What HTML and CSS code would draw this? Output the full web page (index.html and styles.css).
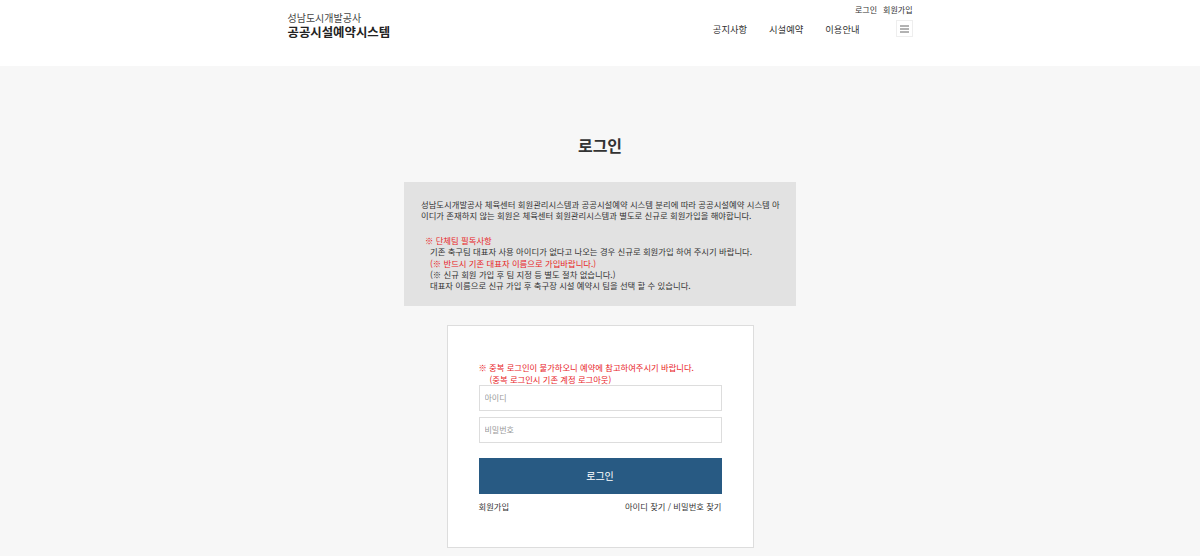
FILE: index.html
```
<!DOCTYPE html>
<html lang="ko">
<head>
    <meta charset="UTF-8">
    <meta name="viewport" content="width=device-width, initial-scale=1.0">
    <title>공공시설예약시스템 - 로그인</title>
    <link rel="stylesheet" href="styles.css">
</head>
<body>
    <header class="header">
        <div class="header-inner">
            <div class="logo">
                <span class="logo-sub">성남도시개발공사</span>
                <span class="logo-main">공공시설예약시스템</span>
            </div>
            <div class="header-right">
                <div class="util">
                    <a href="#">로그인</a>
                    <a href="#">회원가입</a>
                </div>
                <nav class="gnb">
                    <a href="#">공지사항</a>
                    <a href="#">시설예약</a>
                    <a href="#">이용안내</a>
                    <button class="menu-btn" type="button">
                        <svg width="9" height="8" viewBox="0 0 9 8">
                            <path d="M0 1h9M0 4h9M0 7h9" stroke="#666" stroke-width="1"/>
                        </svg>
                    </button>
                </nav>
            </div>
        </div>
    </header>

    <main class="content">
        <h1 class="page-title">로그인</h1>

        <div class="notice">
            <p>성남도시개발공사 체육센터 회원관리시스템과 공공시설예약 시스템 분리에 따라 공공시설예약 시스템 아이디가 존재하지 않는 회원은 체육센터 회원관리시스템과 별도로 신규로 회원가입을 해야합니다.</p>
            <div class="notice-sub">
                <p class="red">※ 단체팀 필독사항</p>
                <p class="indent">기존 축구팀 대표자 사용 아이디가 없다고 나오는 경우 신규로 회원가입 하여 주시기 바랍니다.</p>
                <p class="indent red">(※ 반드시 기존 대표자 이름으로 가입바랍니다.)</p>
                <p class="indent">(※ 신규 회원 가입 후 팀 지정 등 별도 절차 없습니다.)</p>
                <p class="indent">대표자 이름으로 신규 가입 후 축구장 시설 예약시 팀을 선택 할 수 있습니다.</p>
            </div>
        </div>

        <div class="login-box">
            <p class="warn">※ 중복 로그인이 불가하오니 예약에 참고하여주시기 바랍니다.<br><span>(중복 로그인시 기존 계정 로그아웃)</span></p>
            <input class="field" type="text" placeholder="아이디">
            <input class="field" type="password" placeholder="비밀번호">
            <button class="login-btn" type="button">로그인</button>
            <div class="login-links">
                <a href="#">회원가입</a>
                <a href="#">아이디 찾기 / 비밀번호 찾기</a>
            </div>
        </div>
    </main>
</body>
</html>
```

FILE: styles.css
```
* {
    box-sizing: border-box;
}
body {
    margin: 0;
    font-family: "Noto Sans CJK KR", "Noto Sans", sans-serif;
    color: #333;
    background-color: #f7f7f7;
}
a {
    color: inherit;
    text-decoration: none;
}
p {
    margin: 0;
}
.header {
    background-color: #fff;
    height: 66px;
}
.header-inner {
    width: 625px;
    margin: 0 auto;
    display: flex;
    justify-content: space-between;
}
.logo {
    display: flex;
    flex-direction: column;
    padding-top: 12px;
}
.logo-sub {
    font-size: 10px;
    line-height: 12px;
    color: #444;
}
.logo-main {
    font-size: 12.4px;
    line-height: 16px;
    font-weight: bold;
    color: #222;
}
.header-right {
    display: flex;
    flex-direction: column;
    align-items: flex-end;
    padding-top: 4px;
}
.util {
    display: flex;
    gap: 6px;
    font-size: 8px;
    line-height: 11px;
    color: #333;
}
.gnb {
    display: flex;
    align-items: center;
    margin-top: 5px;
    font-size: 9.3px;
    color: #333;
}
.gnb a {
    margin-left: 22px;
}
.menu-btn {
    margin-left: 36px;
    width: 17px;
    height: 17px;
    padding: 0;
    border: 1px solid #eee;
    background-color: #fff;
    display: flex;
    align-items: center;
    justify-content: center;
    cursor: pointer;
}
.content {
    display: flex;
    flex-direction: column;
    align-items: center;
    padding-top: 67px;
}
.page-title {
    margin: 0;
    font-size: 16px;
    line-height: 24px;
    font-weight: bold;
    color: #333;
}
.notice {
    width: 392px;
    margin-top: 25px;
    padding: 17px 16px 14px 17px;
    background-color: #e2e2e2;
    font-size: 8.35px;
    line-height: 11.4px;
    color: #333;
}
.notice-sub {
    margin-top: 13px;
    padding-left: 4px;
}
.notice .indent {
    padding-left: 5px;
}
.red {
    color: #e8231f;
}
.login-box {
    width: 307px;
    margin-top: 19px;
    padding: 35px 31px 34px;
    background-color: #fff;
    border: 1px solid #ddd;
    display: flex;
    flex-direction: column;
}
.warn {
    color: #e8231f;
    font-size: 8.3px;
    line-height: 12px;
}
.warn span {
    padding-left: 11px;
}
.field {
    height: 26px;
    margin-top: 0;
    margin-bottom: 4px;
    padding: 0 5px;
    border: 1px solid #ddd;
    font-family: inherit;
    font-size: 8px;
    color: #333;
}
.field + .field {
    margin-top: 2px;
}
.field::placeholder {
    color: #999;
}
.login-btn {
    height: 36px;
    margin-top: 11px;
    border: 0;
    background-color: #285a83;
    color: #fff;
    font-family: inherit;
    font-size: 10px;
    cursor: pointer;
}
.login-links {
    display: flex;
    justify-content: space-between;
    margin-top: 5px;
    font-size: 8.3px;
    line-height: 14px;
    color: #333;
}
```
